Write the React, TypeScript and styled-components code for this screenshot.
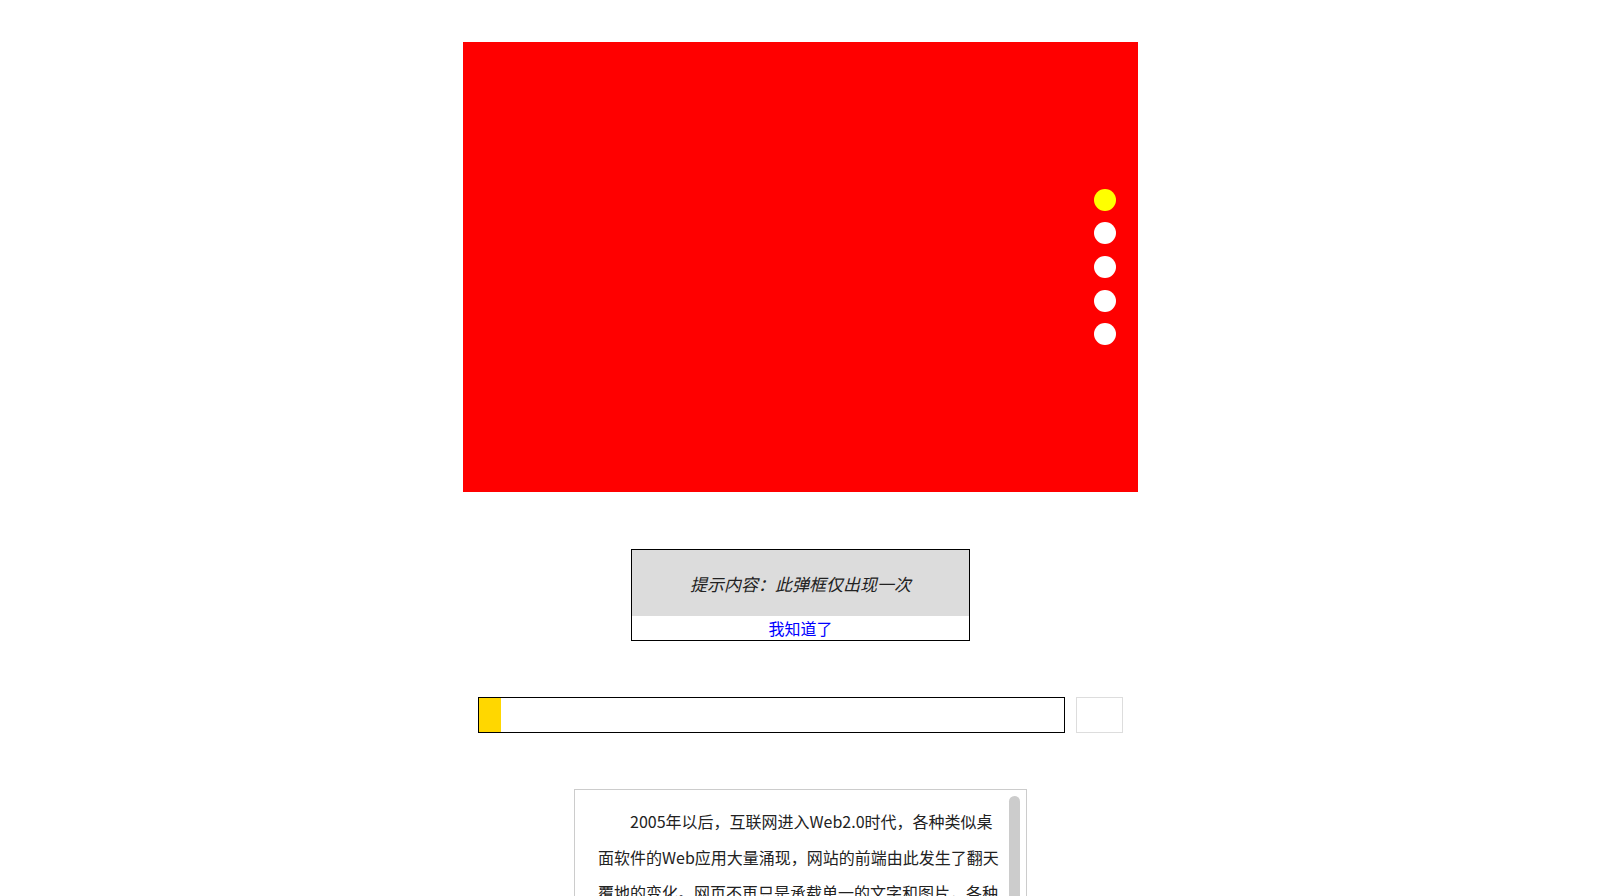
import React from 'react';
import styled, { createGlobalStyle } from 'styled-components';

const GlobalStyle = createGlobalStyle`
  body {
    margin: 0;
    background: #fff;
    font-family: "Noto Sans CJK SC", "Noto Sans", sans-serif;
    color: #333;
  }
`;

const slides = [0, 1, 2, 3, 4];

const article =
  '2005年以后，互联网进入Web2.0时代，各种类似桌面软件的Web应用大量涌现，网站的前端由此发生了翻天覆地的变化。网页不再只是承载单一的文字和图片，各种富媒体让网页的内容更加生动，网页上软件化的交互形式为用户提供了更好的使用体验，这些都是基于前端技术实现的。以前会Photoshop和Dreamweaver就可以制作网页，现在只掌握这些已经远远不够了。无论是开发难度上，还是开发方式上，现在的网页制作都更接近传统的网站后台开发，所以现在不再叫网页制作，而是叫Web前端开发。';

export default function App() {
  const [active] = React.useState(0);
  const [progress] = React.useState(22);
  const [tipOpen, setTipOpen] = React.useState(true);

  return (
    <>
      <GlobalStyle />
      <Page>
        <Banner>
          <Dots>
            {slides.map((i) => (
              <Dot key={i} active={i === active} />
            ))}
          </Dots>
        </Banner>

        {tipOpen && (
          <Tip>
            <Tip.Message>提示内容：此弹框仅出现一次</Tip.Message>
            <Tip.Button href="#" onClick={(e) => { e.preventDefault(); setTipOpen(false); }}>
              我知道了
            </Tip.Button>
          </Tip>
        )}

        <ProgressRow>
          <Track>
            <Fill style={{ width: progress }} />
          </Track>
          <Counter />
        </ProgressRow>

        <Reader>
          <Reader.Body>
            <Reader.Text>{article}</Reader.Text>
          </Reader.Body>
          <Reader.Bar>
            <Reader.Thumb />
          </Reader.Bar>
        </Reader>
      </Page>
    </>
  );
}

const Page = styled.div`
  display: flex;
  flex-direction: column;
  align-items: center;
  padding: 42px 6px 40px 0;
`;

const Banner = styled.div`
  width: 675px;
  height: 450px;
  background: #ff0000;
  display: flex;
  justify-content: flex-end;
  align-items: center;
  padding-right: 22px;
  box-sizing: border-box;
  margin-bottom: 57px;
`;

const Dots = styled.ul`
  list-style: none;
  margin: 0;
  padding: 0;
  display: flex;
  flex-direction: column;
  gap: 11.6px;
`;

const Dot = styled.li<{ active: boolean }>`
  width: 22px;
  height: 22px;
  border-radius: 50%;
  background: ${({ active }) => (active ? '#ffff00' : '#fff')};
`;

const Tip = Object.assign(
  styled.div`
    width: 339px;
    height: 92px;
    border: 1px solid #000;
    box-sizing: border-box;
    display: flex;
    flex-direction: column;
    margin-bottom: 56px;
  `,
  {
    Message: styled.p`
      margin: 0;
      height: 66px;
      flex-shrink: 0;
      background: #dcdcdc;
      display: flex;
      align-items: center;
      justify-content: center;
      font-size: 17px;
      font-style: italic;
      color: #222;
    `,
    Button: styled.a`
      display: block;
      height: 24px;
      line-height: 24px;
      text-align: center;
      font-size: 16px;
      color: #0000ff;
      text-decoration: none;
    `,
  }
);

const ProgressRow = styled.div`
  display: flex;
  gap: 11px;
  margin-bottom: 56px;
`;

const Track = styled.div`
  width: 587px;
  height: 36px;
  border: 1px solid #000;
  box-sizing: border-box;
  display: flex;
`;

const Fill = styled.div`
  height: 100%;
  background: #ffd700;
`;

const Counter = styled.div`
  width: 47px;
  height: 36px;
  border: 1px solid #ddd;
  box-sizing: border-box;
`;

const Reader = Object.assign(
  styled.div`
    width: 453px;
    height: 300px;
    border: 1px solid #ccc;
    box-sizing: border-box;
    display: flex;
  `,
  {
    Body: styled.div`
      flex: 1;
      overflow: hidden;
      padding: 14px 5px 0 23px;
    `,
    Text: styled.p`
      margin: 0;
      width: 405px;
      font-size: 16px;
      line-height: 35.5px;
      text-indent: 2em;
      color: #222;
    `,
    Bar: styled.div`
      width: 18px;
      flex-shrink: 0;
      padding: 6px 6px 0 1px;
      box-sizing: border-box;
    `,
    Thumb: styled.div`
      height: 200px;
      border-radius: 6px;
      background: #cccccc;
    `,
  }
);
